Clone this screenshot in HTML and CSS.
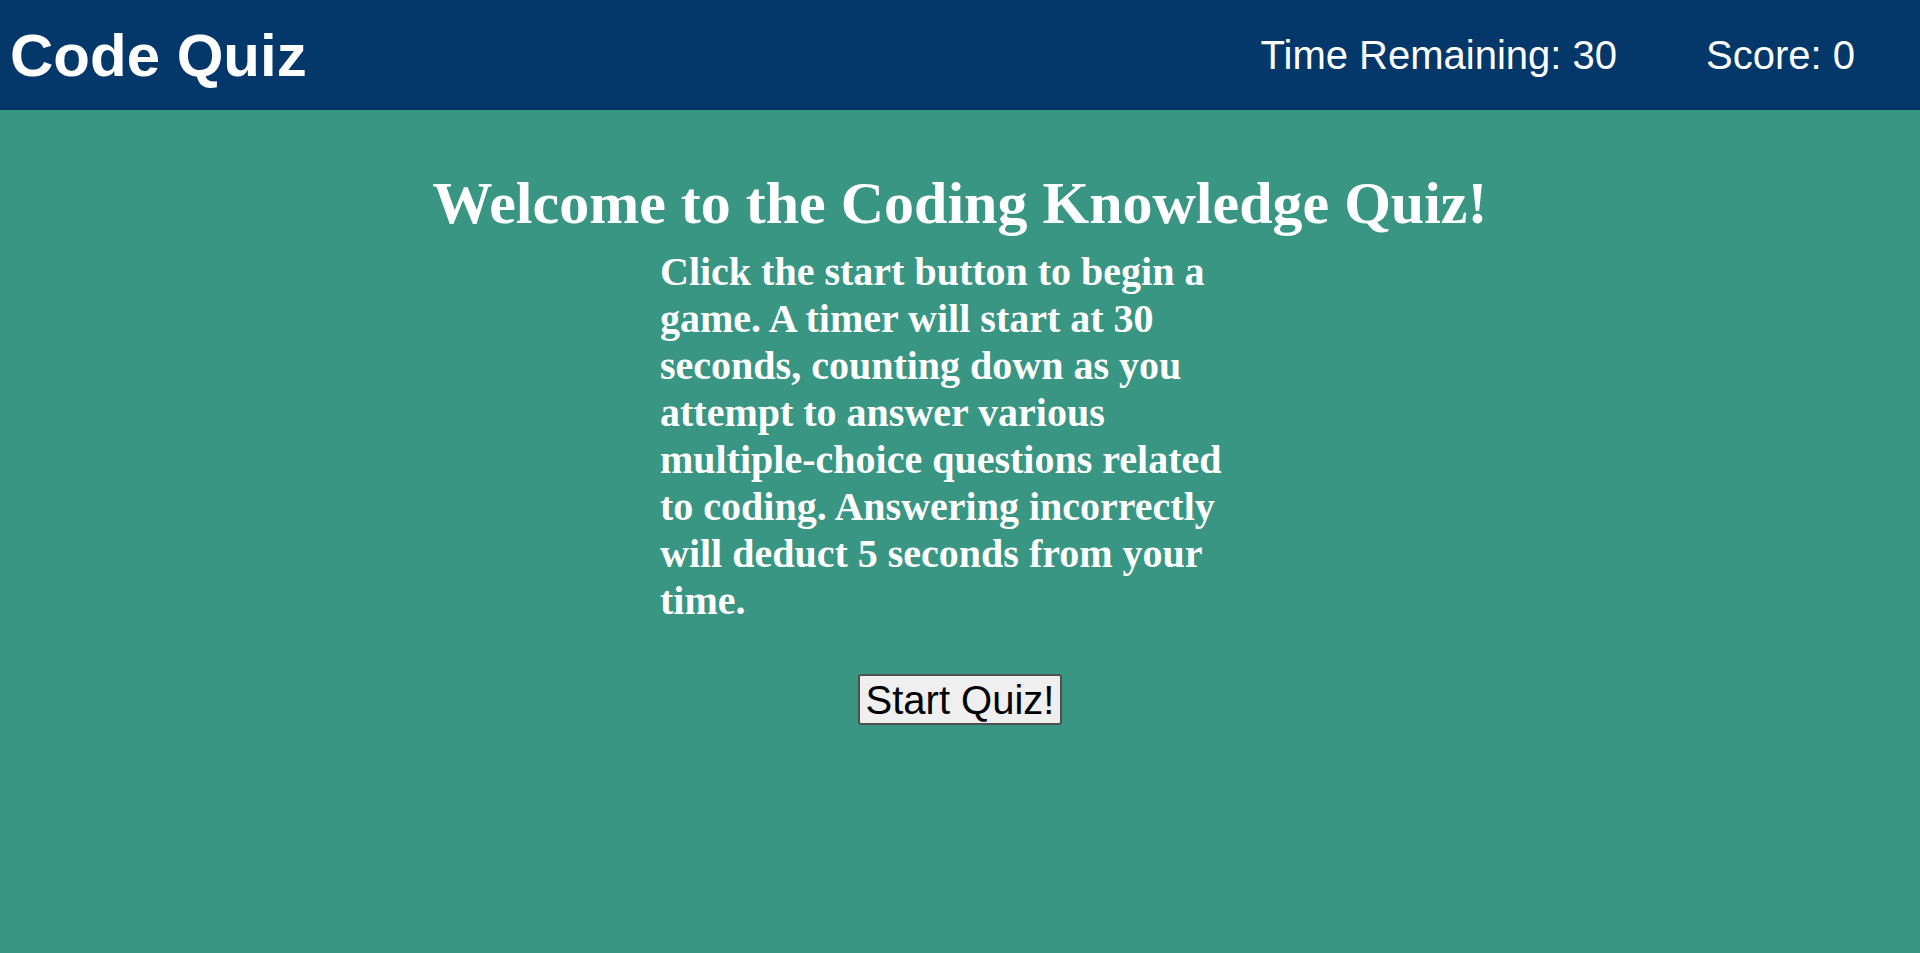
FILE: index.html
```html
<!DOCTYPE html>
<html lang="en">
<head>
<meta charset="utf-8">
<title>Code Quiz</title>
<link rel="stylesheet" href="styles.css">
</head>
<body>
<header class="topbar">
  <div class="brand">Code Quiz</div>
  <div class="stats">
    <span class="stat">Time Remaining: 30</span>
    <span class="stat">Score: 0</span>
  </div>
</header>
<main class="intro">
  <h1 class="intro-title">Welcome to the Coding Knowledge Quiz!</h1>
  <p class="intro-text">Click the start button to begin a game. A timer will start at 30 seconds, counting down as you attempt to answer various multiple-choice questions related to coding. Answering incorrectly will deduct 5 seconds from your time.</p>
  <button class="start-btn" type="button">Start Quiz!</button>
</main>
</body>
</html>
```
FILE: styles.css
```css
html, body {
  margin: 0;
  padding: 0;
}
body {
  background: #389683;
  min-height: 953px;
  font-family: "Liberation Serif", "Times New Roman", serif;
  color: #ffffff;
}
.topbar {
  height: 110px;
  background: #04386b;
  display: flex;
  align-items: center;
  justify-content: space-between;
  padding: 0 65px 0 10px;
  font-family: "Liberation Sans", Arial, sans-serif;
}
.brand {
  font-size: 60px;
  font-weight: bold;
}
.stats {
  display: flex;
  gap: 89px;
}
.stat {
  font-size: 40px;
}
.intro {
  display: flex;
  flex-direction: column;
  align-items: center;
}
.intro-title {
  margin: 59px 0 0;
  font-size: 60px;
  font-weight: bold;
  text-align: center;
}
.intro-text {
  margin: 10px 0 0;
  width: 600px;
  font-size: 40px;
  font-weight: bold;
  line-height: 47px;
}
.start-btn {
  margin-top: 50px;
  font-family: "Liberation Sans", Arial, sans-serif;
  font-size: 40px;
  line-height: 46px;
  color: #000000;
  background: #efefef;
  border: 2px solid #4f4f4f;
  border-radius: 3px;
  padding: 1px 6px 0;
}
```
